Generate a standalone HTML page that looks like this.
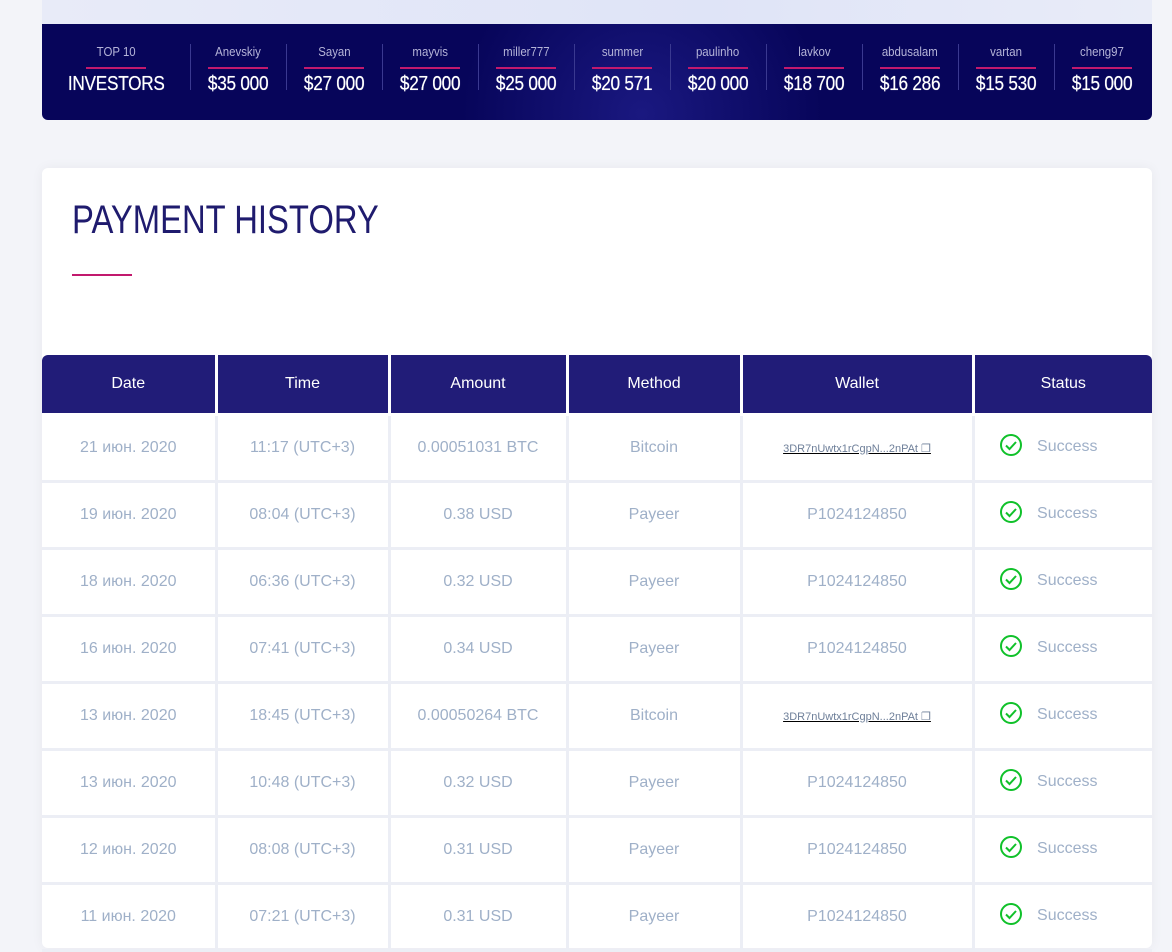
<!DOCTYPE html>
<html><head><meta charset="utf-8"><style>
*{margin:0;padding:0;box-sizing:border-box}
body{width:1172px;height:929px;overflow:hidden;background:#f3f4f9;font-family:"Liberation Sans",sans-serif;position:relative}
.topbg{position:absolute;left:42px;top:0;width:1110px;height:30px;background:linear-gradient(90deg,#e8ebf8,#dfe4f7 60%,#e9ecf8)}
.banner{position:absolute;left:42px;top:24px;width:1110px;height:96px;background:radial-gradient(circle at 600px 90px,#1a1880 0,#07055a 180px),#07055a;border-radius:0 0 6px 6px;display:flex;color:#fff;overflow:hidden}
.bc{width:96px;text-align:center;position:relative;padding-top:19px}
.bc.first{width:148px}
.bc+.bc:before{content:"";position:absolute;left:0;top:20px;height:46px;border-left:1px solid #3a3990}
.bc .n{font-size:13px;color:#b5b4d8;height:17px;display:inline-block;transform:scaleX(.88)}
.bc .l{width:60px;height:2px;background:#c2196d;margin:6px auto 4px}
.bc .v{font-size:20px;display:inline-block;transform:scaleX(.86);letter-spacing:-.3px;text-shadow:0 0 .6px #fff}
.card{position:absolute;left:42px;top:168px;width:1110px;height:780px;background:#fff;border-radius:6px;box-shadow:0 0 12px rgba(0,0,0,.05)}
h1{position:absolute;left:30px;top:30px;font-weight:normal;font-size:40px;color:#1f1b6e;transform:scaleX(.82);transform-origin:0 0}
.ul{position:absolute;left:30px;top:106px;width:60px;height:2px;background:#c2196d}
table{position:absolute;left:0;top:187px;width:1110px;border-collapse:collapse}
td,th{border:3px solid #eceef5;text-align:center;font-size:16px;font-weight:normal;color:#9fb0c8;height:67px}
th{background:#211c78;color:#fff;height:59px;border-color:#fff}
tr th:first-child{border-left:0;border-radius:6px 0 0 0}tr th:last-child{border-right:0;border-radius:0 6px 0 0}
tr td:first-child{border-left:0}tr td:last-child{border-right:0}
tr:first-child th{border-top:0}
a{font-size:11px;color:#6e7f99;text-decoration:underline;text-decoration-color:#000}
.s{display:inline-flex;align-items:center;gap:14px;margin-left:-30px;line-height:24px}
.s svg{display:block}
.s b{font-weight:normal;position:relative;top:2px}
</style></head><body>
<div class="topbg"></div>
<div class="banner">
<div class="bc first"><div class="n">TOP 10</div><div class="l"></div><div class="v">INVESTORS</div></div>
<div class="bc"><div class="n">Anevskiy</div><div class="l"></div><div class="v">$35 000</div></div>
<div class="bc"><div class="n">Sayan</div><div class="l"></div><div class="v">$27 000</div></div>
<div class="bc"><div class="n">mayvis</div><div class="l"></div><div class="v">$27 000</div></div>
<div class="bc"><div class="n">miller777</div><div class="l"></div><div class="v">$25 000</div></div>
<div class="bc"><div class="n">summer</div><div class="l"></div><div class="v">$20 571</div></div>
<div class="bc"><div class="n">paulinho</div><div class="l"></div><div class="v">$20 000</div></div>
<div class="bc"><div class="n">lavkov</div><div class="l"></div><div class="v">$18 700</div></div>
<div class="bc"><div class="n">abdusalam</div><div class="l"></div><div class="v">$16 286</div></div>
<div class="bc"><div class="n">vartan</div><div class="l"></div><div class="v">$15 530</div></div>
<div class="bc"><div class="n">cheng97</div><div class="l"></div><div class="v">$15 000</div></div>
</div>
<div class="card">
<h1>PAYMENT HISTORY</h1><div class="ul"></div>
<table>
<tr><th style="width:174px">Date</th><th style="width:173px">Time</th><th style="width:178px">Amount</th><th style="width:174px">Method</th><th style="width:232px">Wallet</th><th>Status</th></tr>
<tr><td>21 июн. 2020</td><td>11:17 (UTC+3)</td><td>0.00051031 BTC</td><td>Bitcoin</td><td><a>3DR7nUwtx1rCgpN...2nPAt ❐</a></td><td><span class="s"><svg width="24" height="24" viewBox="0 0 24 24"><circle cx="12" cy="12" r="10" fill="none" stroke="#10c12a" stroke-width="2"/><path d="M7 12.5l3.5 3.5 6.5-7" fill="none" stroke="#10c12a" stroke-width="2"/></svg><b>Success</b></span></td></tr>
<tr><td>19 июн. 2020</td><td>08:04 (UTC+3)</td><td>0.38 USD</td><td>Payeer</td><td>P1024124850</td><td><span class="s"><svg width="24" height="24" viewBox="0 0 24 24"><circle cx="12" cy="12" r="10" fill="none" stroke="#10c12a" stroke-width="2"/><path d="M7 12.5l3.5 3.5 6.5-7" fill="none" stroke="#10c12a" stroke-width="2"/></svg><b>Success</b></span></td></tr>
<tr><td>18 июн. 2020</td><td>06:36 (UTC+3)</td><td>0.32 USD</td><td>Payeer</td><td>P1024124850</td><td><span class="s"><svg width="24" height="24" viewBox="0 0 24 24"><circle cx="12" cy="12" r="10" fill="none" stroke="#10c12a" stroke-width="2"/><path d="M7 12.5l3.5 3.5 6.5-7" fill="none" stroke="#10c12a" stroke-width="2"/></svg><b>Success</b></span></td></tr>
<tr><td>16 июн. 2020</td><td>07:41 (UTC+3)</td><td>0.34 USD</td><td>Payeer</td><td>P1024124850</td><td><span class="s"><svg width="24" height="24" viewBox="0 0 24 24"><circle cx="12" cy="12" r="10" fill="none" stroke="#10c12a" stroke-width="2"/><path d="M7 12.5l3.5 3.5 6.5-7" fill="none" stroke="#10c12a" stroke-width="2"/></svg><b>Success</b></span></td></tr>
<tr><td>13 июн. 2020</td><td>18:45 (UTC+3)</td><td>0.00050264 BTC</td><td>Bitcoin</td><td><a>3DR7nUwtx1rCgpN...2nPAt ❐</a></td><td><span class="s"><svg width="24" height="24" viewBox="0 0 24 24"><circle cx="12" cy="12" r="10" fill="none" stroke="#10c12a" stroke-width="2"/><path d="M7 12.5l3.5 3.5 6.5-7" fill="none" stroke="#10c12a" stroke-width="2"/></svg><b>Success</b></span></td></tr>
<tr><td>13 июн. 2020</td><td>10:48 (UTC+3)</td><td>0.32 USD</td><td>Payeer</td><td>P1024124850</td><td><span class="s"><svg width="24" height="24" viewBox="0 0 24 24"><circle cx="12" cy="12" r="10" fill="none" stroke="#10c12a" stroke-width="2"/><path d="M7 12.5l3.5 3.5 6.5-7" fill="none" stroke="#10c12a" stroke-width="2"/></svg><b>Success</b></span></td></tr>
<tr><td>12 июн. 2020</td><td>08:08 (UTC+3)</td><td>0.31 USD</td><td>Payeer</td><td>P1024124850</td><td><span class="s"><svg width="24" height="24" viewBox="0 0 24 24"><circle cx="12" cy="12" r="10" fill="none" stroke="#10c12a" stroke-width="2"/><path d="M7 12.5l3.5 3.5 6.5-7" fill="none" stroke="#10c12a" stroke-width="2"/></svg><b>Success</b></span></td></tr>
<tr><td>11 июн. 2020</td><td>07:21 (UTC+3)</td><td>0.31 USD</td><td>Payeer</td><td>P1024124850</td><td><span class="s"><svg width="24" height="24" viewBox="0 0 24 24"><circle cx="12" cy="12" r="10" fill="none" stroke="#10c12a" stroke-width="2"/><path d="M7 12.5l3.5 3.5 6.5-7" fill="none" stroke="#10c12a" stroke-width="2"/></svg><b>Success</b></span></td></tr>
</table>
</div>
</body></html>
